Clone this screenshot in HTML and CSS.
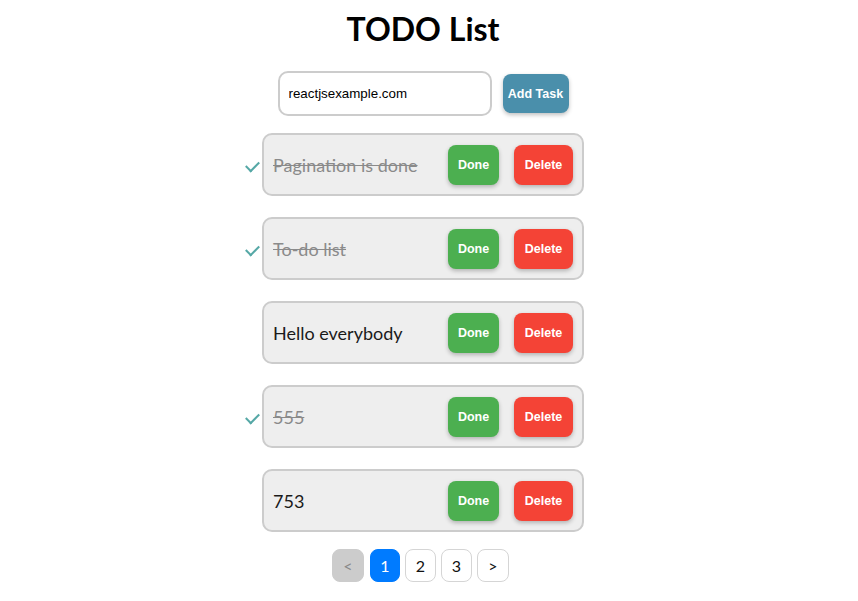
FILE: index.html
```html
<!DOCTYPE html>
<html lang="en">
<head>
<meta charset="utf-8">
<title>TODO List</title>
<link rel="stylesheet" href="styles.css">
</head>
<body>
<div class="app">
  <h1 class="title">TODO List</h1>
  <form class="add-form">
    <input class="task-input" type="text" value="reactjsexample.com">
    <button class="add-btn" type="button">Add Task</button>
  </form>
  <ul class="todo-list">
    <li class="todo completed">
      <div class="todo-box">
        <span class="todo-text">Pagination is done</span>
        <button class="btn btn-done" type="button">Done</button>
        <button class="btn btn-delete" type="button">Delete</button>
      </div>
    </li>
    <li class="todo completed">
      <div class="todo-box">
        <span class="todo-text">To-do list</span>
        <button class="btn btn-done" type="button">Done</button>
        <button class="btn btn-delete" type="button">Delete</button>
      </div>
    </li>
    <li class="todo">
      <div class="todo-box">
        <span class="todo-text">Hello everybody</span>
        <button class="btn btn-done" type="button">Done</button>
        <button class="btn btn-delete" type="button">Delete</button>
      </div>
    </li>
    <li class="todo completed">
      <div class="todo-box">
        <span class="todo-text">555</span>
        <button class="btn btn-done" type="button">Done</button>
        <button class="btn btn-delete" type="button">Delete</button>
      </div>
    </li>
    <li class="todo">
      <div class="todo-box">
        <span class="todo-text">753</span>
        <button class="btn btn-done" type="button">Done</button>
        <button class="btn btn-delete" type="button">Delete</button>
      </div>
    </li>
  </ul>
  <nav class="pagination">
    <button class="page page-prev" type="button">&lt;</button>
    <button class="page page-active" type="button">1</button>
    <button class="page" type="button">2</button>
    <button class="page" type="button">3</button>
    <button class="page" type="button">&gt;</button>
  </nav>
</div>
</body>
</html>
```
FILE: styles.css
```css
* { box-sizing: border-box; }

html, body {
  margin: 0;
  padding: 0;
  background: #ffffff;
}

body {
  font-family: "Segoe UI", Lato, "Open Sans", sans-serif;
  color: #111;
}

.app {
  display: flex;
  flex-direction: column;
  align-items: center;
  padding: 10px 12px 0 0;
}

.title {
  margin: 0;
  font-size: 32px;
  line-height: 38px;
  font-weight: 700;
  color: #000;
}

.add-form {
  display: flex;
  align-items: center;
  gap: 11px;
  margin: 23px 0 0 0;
}

.task-input {
  width: 214px;
  height: 45px;
  border: 2px solid #cccccc;
  border-radius: 10px;
  padding: 0 9px;
  font-family: "Liberation Sans", Arial, sans-serif;
  font-size: 13.33px;
  color: #000;
  outline: none;
}

.add-btn {
  width: 66px;
  height: 39px;
  border: none;
  border-radius: 8px;
  background: #4a8fab;
  color: #fff;
  font-family: "Liberation Sans", Arial, sans-serif;
  font-size: 12.5px;
  font-weight: 700;
  padding: 0;
  box-shadow: 0 2px 4px rgba(0, 0, 0, 0.25);
}

.todo-list {
  list-style: none;
  margin: 17px 0 0 0;
  padding: 0;
  display: flex;
  flex-direction: column;
  gap: 21px;
}

.todo {
  position: relative;
}

.todo.completed::before {
  content: "";
  position: absolute;
  left: -16px;
  top: 28px;
  width: 11px;
  height: 6px;
  border-left: 2px solid #55a8a6;
  border-bottom: 2px solid #55a8a6;
  transform: rotate(-45deg);
}

.todo-box {
  display: flex;
  align-items: center;
  width: 322px;
  height: 63px;
  padding: 0 9px;
  background: #eeeeee;
  border: 2px solid #cccccc;
  border-radius: 10px;
}

.todo-text {
  flex: 1;
  font-size: 18px;
  color: #1a1a1a;
}

.completed .todo-text {
  color: #8a8a8a;
  text-decoration: line-through;
}

.btn {
  height: 40px;
  border: none;
  border-radius: 8px;
  color: #fff;
  font-family: "Liberation Sans", Arial, sans-serif;
  font-size: 12.5px;
  font-weight: 700;
  padding: 0;
  box-shadow: 0 2px 4px rgba(0, 0, 0, 0.25);
}

.btn-done {
  width: 51px;
  background: #4caf50;
}

.btn-delete {
  width: 59px;
  margin-left: 15px;
  background: #f44336;
}

.pagination {
  display: flex;
  gap: 5px;
  margin: 17px 5px 0 0;
}

.page {
  height: 33px;
  width: 31px;
  padding: 0;
  border: 1px solid #d5d5d5;
  border-radius: 8px;
  background: #fff;
  font-family: "Segoe UI", Lato, "Open Sans", sans-serif;
  font-size: 16px;
  color: #111;
}

.page-prev {
  width: 32px;
  background: #cccccc;
  border-color: #cccccc;
  color: #888;
  margin-right: 1px;
}

.page-active {
  width: 30px;
  background: #007bff;
  border-color: #007bff;
  color: #fff;
}

.page:last-child {
  width: 32px;
}
```
